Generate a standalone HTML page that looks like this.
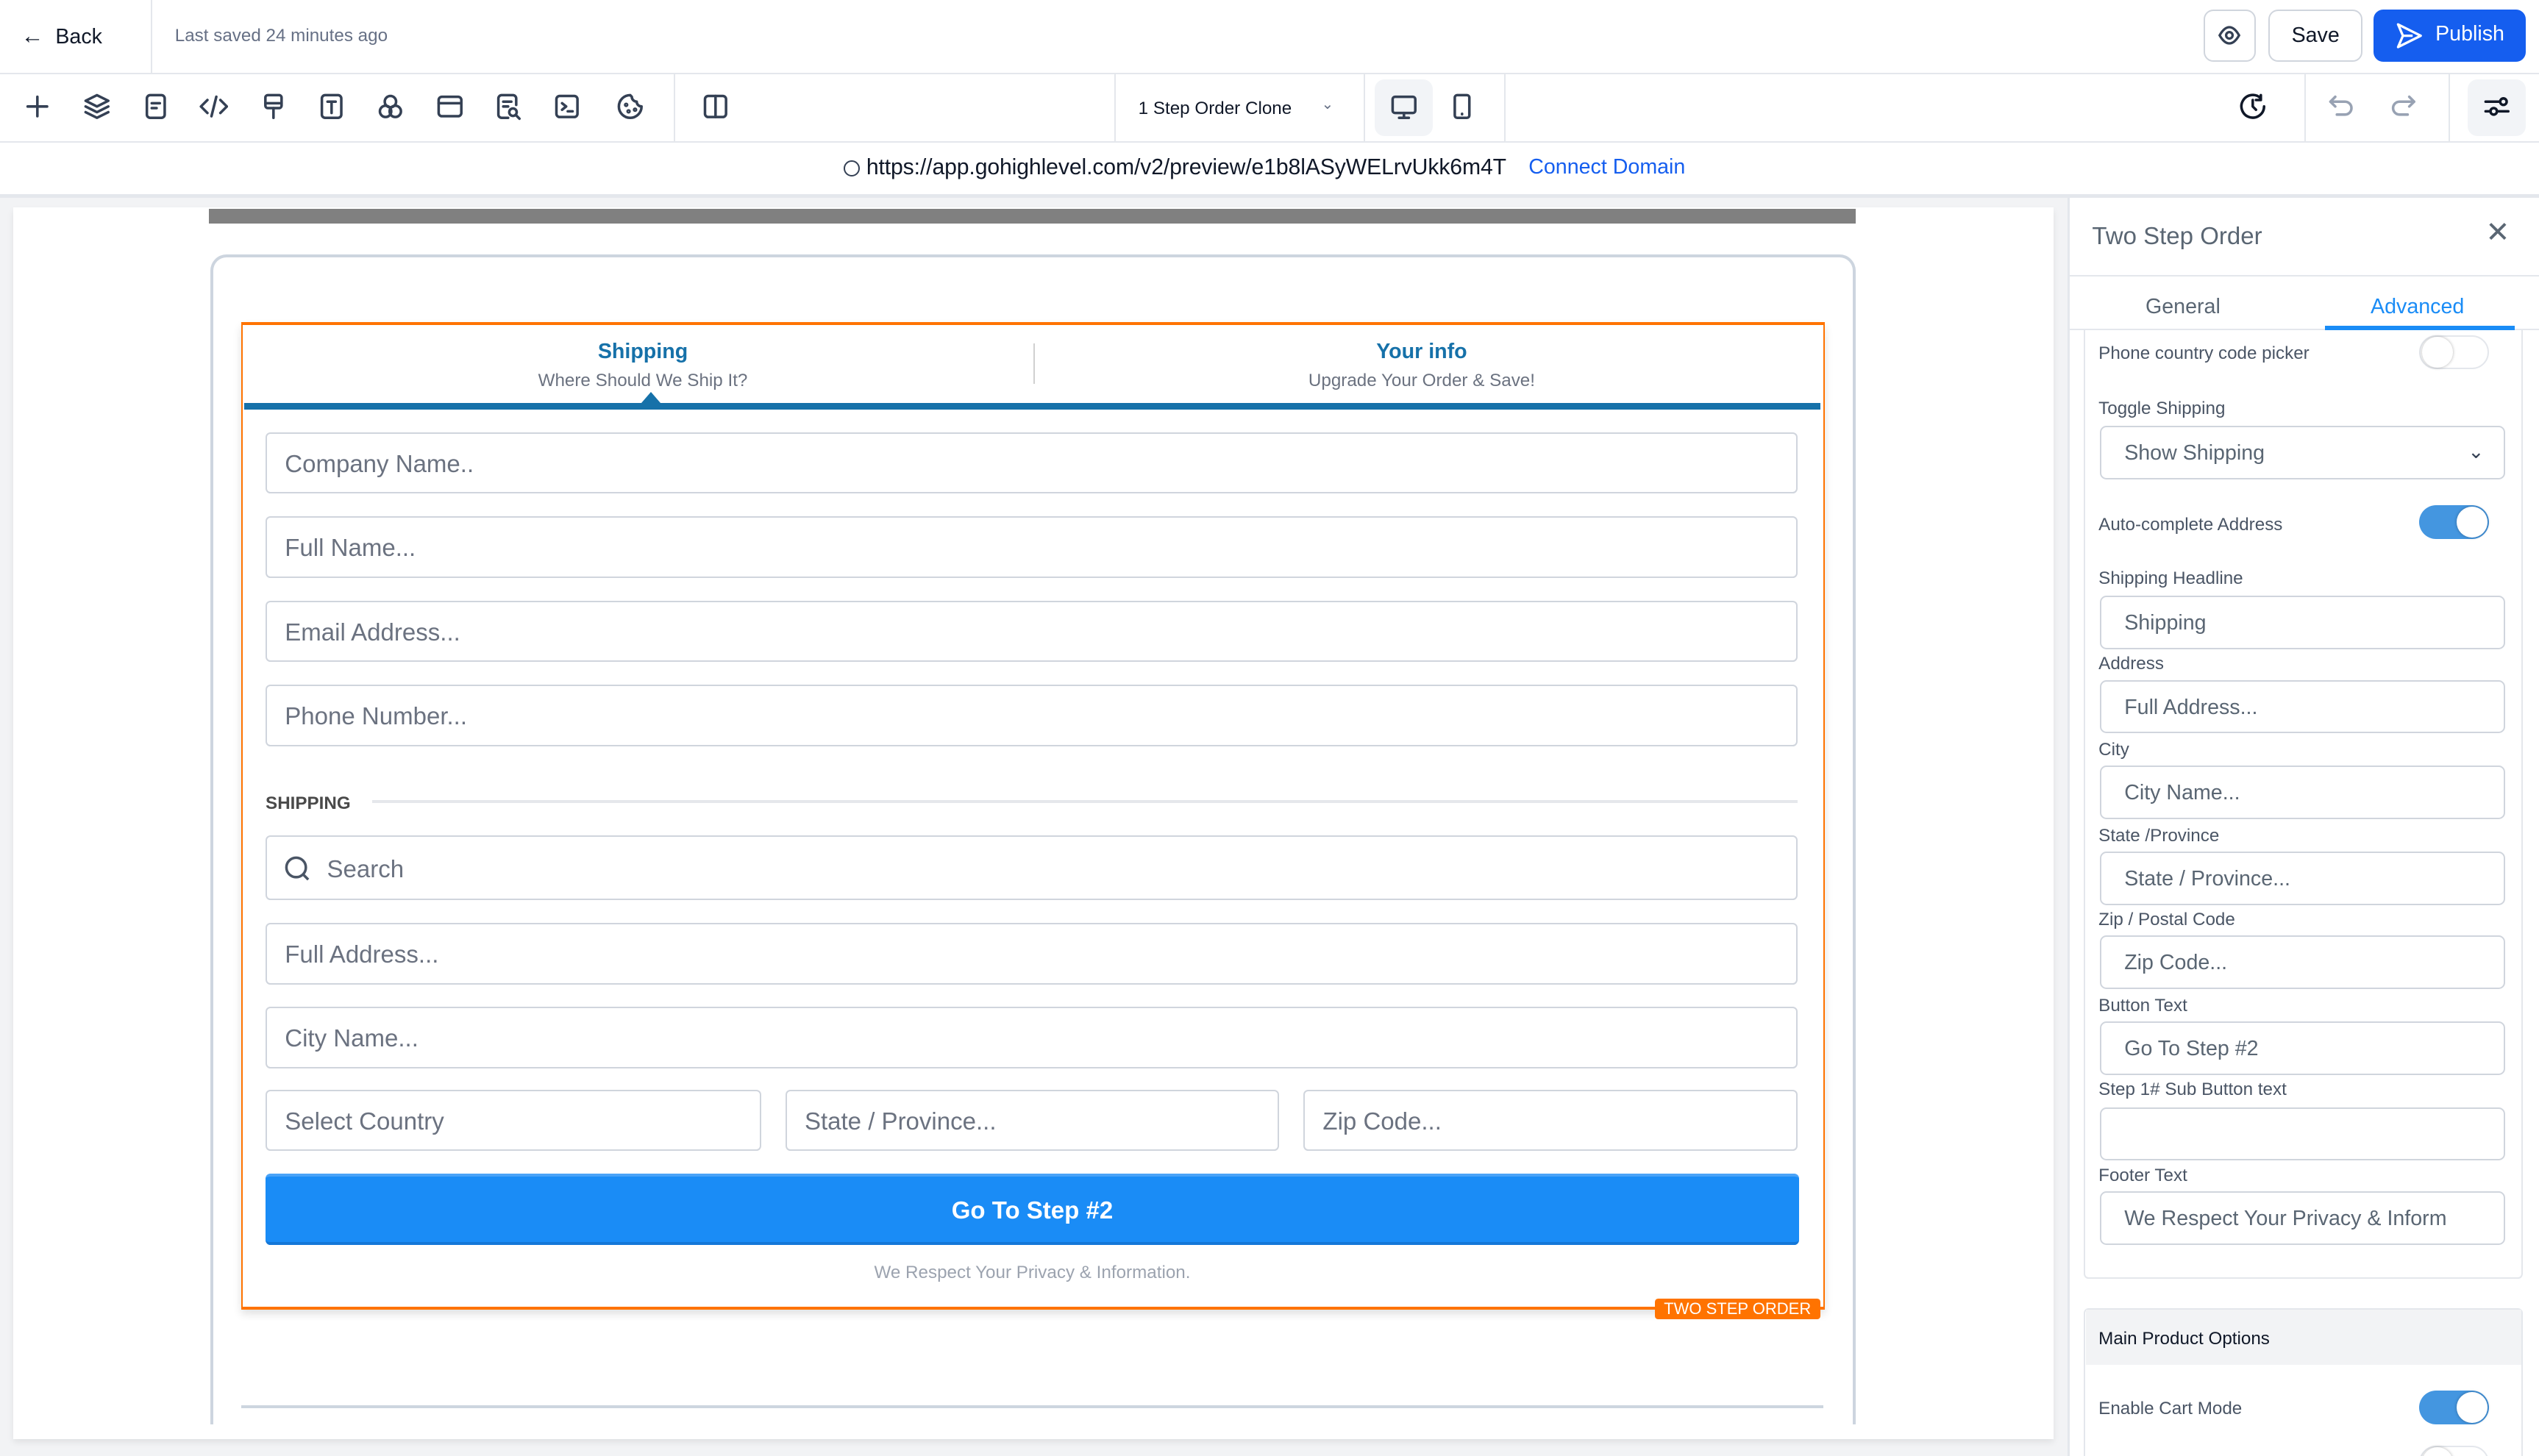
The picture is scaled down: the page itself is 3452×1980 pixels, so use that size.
<!DOCTYPE html>
<html><head><meta charset="utf-8"><style>
*{box-sizing:border-box;margin:0;padding:0}
html,body{width:3452px;height:1980px;overflow:hidden;background:#fff}
#r{position:relative;width:1568px;height:900px;zoom:2.20153;font-family:"Liberation Sans",sans-serif;color:#101828;overflow:hidden;background:#fff}
.a{position:absolute}
.ic{position:absolute;width:18px;height:18px}
.ic svg{width:18px;height:18px;fill:none;stroke:#344054;stroke-width:1.6;stroke-linecap:round;stroke-linejoin:round}
.in{position:absolute;left:164px;width:946px;height:38px;border:1px solid #d0d5dd;border-radius:3px;font-size:15px;color:#6b7280;padding:0 11px;line-height:37px;background:#fff}
.lb{position:absolute;left:1296px;font-size:11px;color:#4a5565}
.pi{position:absolute;left:1297px;width:250px;height:33px;border:1px solid #d0d5dd;border-radius:4px;font-size:13px;color:#5a6673;padding-left:14px;line-height:32px;background:#fff}
.tg{position:absolute;left:1494px;width:43px;height:21px;border-radius:11px;background:#4496e0}
.tg:after{content:"";position:absolute;right:1px;top:1px;width:19px;height:19px;border-radius:50%;background:#fff;box-shadow:0 0 2px rgba(0,0,0,.3)}
.tg.off{background:#fff;border:1px solid #e4e7ec}
.tg.off:after{left:1px;right:auto;top:0}
.vd{position:absolute;width:1px;background:#e4e7ec}
</style></head><body><div id="r">
<!-- top bar -->
<div class="a" style="left:0;top:45px;width:1568px;height:1px;background:#e4e7ec"></div>
<div class="vd" style="left:93px;top:0;height:45px"></div>
<div class="a" style="left:13px;top:14px;font-size:13px;color:#101828"><span style="font-size:14px">&#8592;</span>&nbsp; Back</div>
<div class="a" style="left:108px;top:16px;font-size:11px;color:#667085">Last saved 24 minutes ago</div>
<div class="a" style="left:1361px;top:6px;width:32px;height:32px;border:1px solid #d0d5dd;border-radius:6px"><svg width="30" height="30" viewBox="0 0 30 30" style="position:absolute;left:0;top:0"><path d="M9 15c2-3.5 4-5 6-5s4 1.5 6 5c-2 3.5-4 5-6 5s-4-1.5-6-5z" fill="none" stroke="#344054" stroke-width="1.5"/><circle cx="15" cy="15" r="2" fill="none" stroke="#344054" stroke-width="1.5"/></svg></div>
<div class="a" style="left:1401px;top:6px;width:58px;height:32px;border:1px solid #d0d5dd;border-radius:6px;font-size:13px;text-align:center;line-height:30px;color:#101828">Save</div>
<div class="a" style="left:1466px;top:6px;width:94px;height:32px;background:#155eef;border-radius:6px;color:#fff;font-size:13px;line-height:30px;padding-left:38px">Publish<svg width="18" height="16" viewBox="0 0 18 16" style="position:absolute;left:13px;top:8px"><path d="M2 1l14 7-14 7 3-7z M5 8h6" fill="none" stroke="#fff" stroke-width="1.5" stroke-linejoin="round"/></svg></div>
<!-- toolbar -->
<div class="a" style="left:0;top:87px;width:1568px;height:1px;background:#e4e7ec"></div>
<div class="ic" style="left:14px;top:57px"><svg viewBox="0 0 18 18"><path d="M9 3v12M3 9h12"/></svg></div>
<div class="ic" style="left:51px;top:57px"><svg viewBox="0 0 18 18"><path d="M9 2l7 3.5-7 3.5-7-3.5z M2 9l7 3.5 7-3.5 M2 12.5l7 3.5 7-3.5"/></svg></div>
<div class="ic" style="left:87px;top:57px"><svg viewBox="0 0 18 18"><rect x="3.5" y="2" width="11" height="14" rx="2"/><path d="M6.5 7h5M6.5 10h3"/></svg></div>
<div class="ic" style="left:123px;top:57px"><svg viewBox="0 0 18 18"><path d="M5 5l-4 4 4 4M13 5l4 4-4 4M10.5 3l-3 12"/></svg></div>
<div class="ic" style="left:160px;top:57px"><svg viewBox="0 0 18 18"><rect x="4" y="2" width="10" height="8" rx="1.5"/><path d="M4 7h10M9 10v6"/></svg></div>
<div class="ic" style="left:196px;top:57px"><svg viewBox="0 0 18 18"><rect x="3" y="2" width="12" height="14" rx="2"/><path d="M6.5 6h5M9 6v7"/></svg></div>
<div class="ic" style="left:232px;top:57px"><svg viewBox="0 0 18 18"><circle cx="9" cy="6" r="3.5"/><circle cx="6" cy="12" r="3.5"/><circle cx="12" cy="12" r="3.5"/></svg></div>
<div class="ic" style="left:269px;top:57px"><svg viewBox="0 0 18 18"><rect x="2" y="3" width="14" height="12" rx="2"/><path d="M2 7h14"/></svg></div>
<div class="ic" style="left:305px;top:57px"><svg viewBox="0 0 18 18"><path d="M9 16H5a2 2 0 0 1-2-2V4a2 2 0 0 1 2-2h7a2 2 0 0 1 2 2v4M6 6h5M6 9h3"/><circle cx="12" cy="12.5" r="2.3"/><path d="M14 14.5l2 2"/></svg></div>
<div class="ic" style="left:341px;top:57px"><svg viewBox="0 0 18 18"><rect x="2.5" y="2.5" width="13" height="13" rx="2"/><path d="M6 7l2.5 2L6 11M9.5 12h3"/></svg></div>
<div class="ic" style="left:380px;top:57px"><svg viewBox="0 0 18 18"><path d="M9 2a7 7 0 1 0 7 7 3 3 0 0 1-3-3 3 3 0 0 1-3-3z"/><circle cx="6.5" cy="8" r=".6"/><circle cx="8" cy="12" r=".6"/><circle cx="12" cy="11" r=".6"/></svg></div>
<div class="vd" style="left:416px;top:46px;height:41px"></div>
<div class="ic" style="left:433px;top:57px"><svg viewBox="0 0 18 18"><rect x="2.5" y="2.5" width="13" height="13" rx="2"/><path d="M9 2.5v13"/></svg></div>
<div class="vd" style="left:688px;top:46px;height:41px"></div>
<div class="a" style="left:703px;top:61px;font-size:11px;color:#101828">1 Step Order Clone</div>
<div class="a" style="left:816px;top:59px;font-size:9px;color:#667085">&#8964;</div>
<div class="vd" style="left:842px;top:46px;height:41px"></div>
<div class="a" style="left:849px;top:49px;width:36px;height:35px;background:#f2f4f7;border-radius:6px"></div>
<div class="ic" style="left:858px;top:57px"><svg viewBox="0 0 18 18"><rect x="2" y="3" width="14" height="10" rx="1.5"/><path d="M9 13v3M6 16h6"/></svg></div>
<div class="ic" style="left:894px;top:57px"><svg viewBox="0 0 18 18"><rect x="4.5" y="2" width="9" height="14" rx="1.5"/><path d="M9 13.5v.3"/></svg></div>
<div class="vd" style="left:929px;top:46px;height:41px"></div>
<div class="ic" style="left:1382px;top:57px"><svg viewBox="0 0 18 18" style="stroke:#101828"><path d="M16 9a7 7 0 1 1-2-5M9 5v4l2 2M14 2v3h-3"/></svg></div>
<div class="vd" style="left:1423px;top:46px;height:41px"></div>
<div class="ic" style="left:1437px;top:57px"><svg viewBox="0 0 18 18" style="stroke:#98a2b3"><path d="M5 3L2 6l3 3M2 6h9a4 4 0 0 1 0 8H6"/></svg></div>
<div class="ic" style="left:1475px;top:57px"><svg viewBox="0 0 18 18" style="stroke:#98a2b3"><path d="M13 3l3 3-3 3M16 6H7a4 4 0 0 0 0 8h5"/></svg></div>
<div class="vd" style="left:1512px;top:46px;height:41px"></div>
<div class="a" style="left:1524px;top:49px;width:36px;height:35px;background:#f2f4f7;border-radius:6px"></div>
<div class="ic" style="left:1533px;top:57px"><svg viewBox="0 0 18 18" style="stroke:#101828"><path d="M2 6h9M2 12h3M10 12h6"/><circle cx="13" cy="6" r="2"/><circle cx="7" cy="12" r="2"/></svg></div>
<!-- url bar -->
<div class="a" style="left:521px;top:99px;width:10px;height:10px;border:1px solid #344054;border-radius:50%"></div>
<div class="a" style="left:535px;top:96px;font-size:13.7px;color:#101828;letter-spacing:-0.05px">https://app.gohighlevel.com/v2/preview/e1b8lASyWELrvUkk6m4T</div>
<div class="a" style="left:944px;top:96px;font-size:13px;color:#155eef">Connect Domain</div>
<div class="a" style="left:0;top:120px;width:1568px;height:2px;background:#e4e7ec"></div>
<!-- canvas -->
<div class="a" style="left:0;top:122px;width:1277px;height:778px;background:#f2f3f5"></div>
<div class="a" style="left:8px;top:128px;width:1260px;height:761px;background:#fff;box-shadow:0 2px 4px rgba(0,0,0,.08)"></div>
<div class="a" style="left:129px;top:129px;width:1017px;height:9px;background:#808080"></div>
<div class="a" style="left:130px;top:157px;width:1016px;height:723px;border:2px solid #cdd5df;border-bottom:none;border-radius:10px 10px 0 0"></div>
<div class="a" style="left:149px;top:868px;width:977px;height:2px;background:#cdd5df"></div>
<!-- orange box -->
<div class="a" style="left:149px;top:199px;width:978px;height:610px;border:1px solid #ff7300;border-top-width:2px;border-bottom-width:2px;box-shadow:0 3px 5px rgba(0,0,0,.12)"></div>
<div class="a" style="left:151px;top:210px;width:492px;text-align:center;font-size:13px;font-weight:bold;color:#1671a9">Shipping</div>
<div class="a" style="left:151px;top:229px;width:492px;text-align:center;font-size:11px;color:#6b7280">Where Should We Ship It?</div>
<div class="a" style="left:638px;top:212px;width:1px;height:25px;background:#d0d0d0"></div>
<div class="a" style="left:640px;top:210px;width:476px;text-align:center;font-size:13px;font-weight:bold;color:#1671a9">Your info</div>
<div class="a" style="left:640px;top:229px;width:476px;text-align:center;font-size:11px;color:#6b7280">Upgrade Your Order &amp; Save!</div>
<div class="a" style="left:151px;top:249px;width:973px;height:4px;background:#1671a9"></div>
<div class="a" style="left:396px;top:242px;width:0;height:0;border-left:6px solid transparent;border-right:6px solid transparent;border-bottom:7px solid #1671a9"></div>
<div class="in" style="top:267px">Company Name..</div>
<div class="in" style="top:319px">Full Name...</div>
<div class="in" style="top:371px">Email Address...</div>
<div class="in" style="top:423px">Phone Number...</div>
<div class="a" style="left:164px;top:490px;font-size:11px;font-weight:bold;color:#4a4a4a">SHIPPING</div>
<div class="a" style="left:230px;top:494px;width:880px;height:2px;background:#e5e7eb"></div>
<div class="in" style="top:516px;height:40px;line-height:40px;padding-left:37px">Search<svg width="18" height="18" viewBox="0 0 18 18" style="position:absolute;left:10px;top:11px"><circle cx="8" cy="8" r="6" fill="none" stroke="#4a5565" stroke-width="1.6"/><path d="M12.5 12.5l3 3" stroke="#4a5565" stroke-width="1.6"/></svg></div>
<div class="in" style="top:570px">Full Address...</div>
<div class="in" style="top:622px">City Name...</div>
<div class="in" style="top:673px;width:306px">Select Country</div>
<div class="in" style="top:673px;left:485px;width:305px">State / Province...</div>
<div class="in" style="top:673px;left:805px;width:305px">Zip Code...</div>
<div class="a" style="left:164px;top:725px;width:947px;height:44px;background:#1a8cf6;border-radius:3px;border-top:2px solid #4aa3f7;border-bottom:2px solid #1477d8;color:#fff;font-weight:bold;font-size:15px;text-align:center;line-height:42px">Go To Step #2</div>
<div class="a" style="left:151px;top:780px;width:973px;text-align:center;font-size:11px;color:#9ca3af">We Respect Your Privacy &amp; Information.</div>
<div class="a" style="left:1022px;top:802px;width:102px;height:13px;background:#ff7300;border-radius:2px;color:#fff;font-size:10px;line-height:13px;text-align:center">TWO STEP ORDER</div>
<!-- right panel -->
<div class="a" style="left:1277px;top:122px;width:1px;height:778px;background:#e4e7ec"></div>
<div class="a" style="left:1292px;top:137px;font-size:15px;color:#5a6673">Two Step Order</div>
<div class="a" style="left:1535px;top:133px;font-size:18px;color:#5a6673">&#x2715;</div>
<div class="a" style="left:1278px;top:170px;width:290px;height:1px;background:#e4e7ec"></div>
<div class="a" style="left:1325px;top:182px;font-size:13px;color:#5a6673">General</div>
<div class="a" style="left:1464px;top:182px;font-size:13px;color:#1a8cf6">Advanced</div>
<div class="a" style="left:1278px;top:203px;width:290px;height:1px;background:#e4e7ec"></div>
<div class="a" style="left:1436px;top:201px;width:117px;height:3px;background:#1a8cf6"></div>
<div class="a" style="left:1287px;top:204px;width:271px;height:586px;border:1px solid #e4e7ec;border-top:none;border-radius:0 0 3px 3px"></div>
<div class="lb" style="top:212px">Phone country code picker</div>
<div class="tg off" style="top:207px"></div>
<div class="lb" style="top:246px">Toggle Shipping</div>
<div class="pi" style="top:263px">Show Shipping<span style="position:absolute;right:12px;top:-1px;font-size:12px;color:#344054">&#8964;</span></div>
<div class="lb" style="top:318px">Auto-complete Address</div>
<div class="tg" style="top:312px"></div>
<div class="lb" style="top:351px">Shipping Headline</div>
<div class="pi" style="top:368px">Shipping</div>
<div class="lb" style="top:404px">Address</div>
<div class="pi" style="top:420px">Full Address...</div>
<div class="lb" style="top:457px">City</div>
<div class="pi" style="top:473px">City Name...</div>
<div class="lb" style="top:510px">State /Province</div>
<div class="pi" style="top:526px">State / Province...</div>
<div class="lb" style="top:562px">Zip / Postal Code</div>
<div class="pi" style="top:578px">Zip Code...</div>
<div class="lb" style="top:615px">Button Text</div>
<div class="pi" style="top:631px">Go To Step #2</div>
<div class="lb" style="top:667px">Step 1# Sub Button text</div>
<div class="pi" style="top:684px"></div>
<div class="lb" style="top:720px">Footer Text</div>
<div class="pi" style="top:736px">We Respect Your Privacy &amp; Inform</div>
<div class="a" style="left:1287px;top:808px;width:271px;height:100px;border:1px solid #e4e7ec;border-radius:3px 3px 0 0"></div>
<div class="a" style="left:1288px;top:809px;width:269px;height:34px;background:#f2f3f5"></div>
<div class="a" style="left:1296px;top:821px;font-size:11px;color:#101828">Main Product Options</div>
<div class="lb" style="top:864px">Enable Cart Mode</div>
<div class="tg" style="top:859px"></div>
<div class="tg off" style="top:893px"></div>
</div></body></html>
